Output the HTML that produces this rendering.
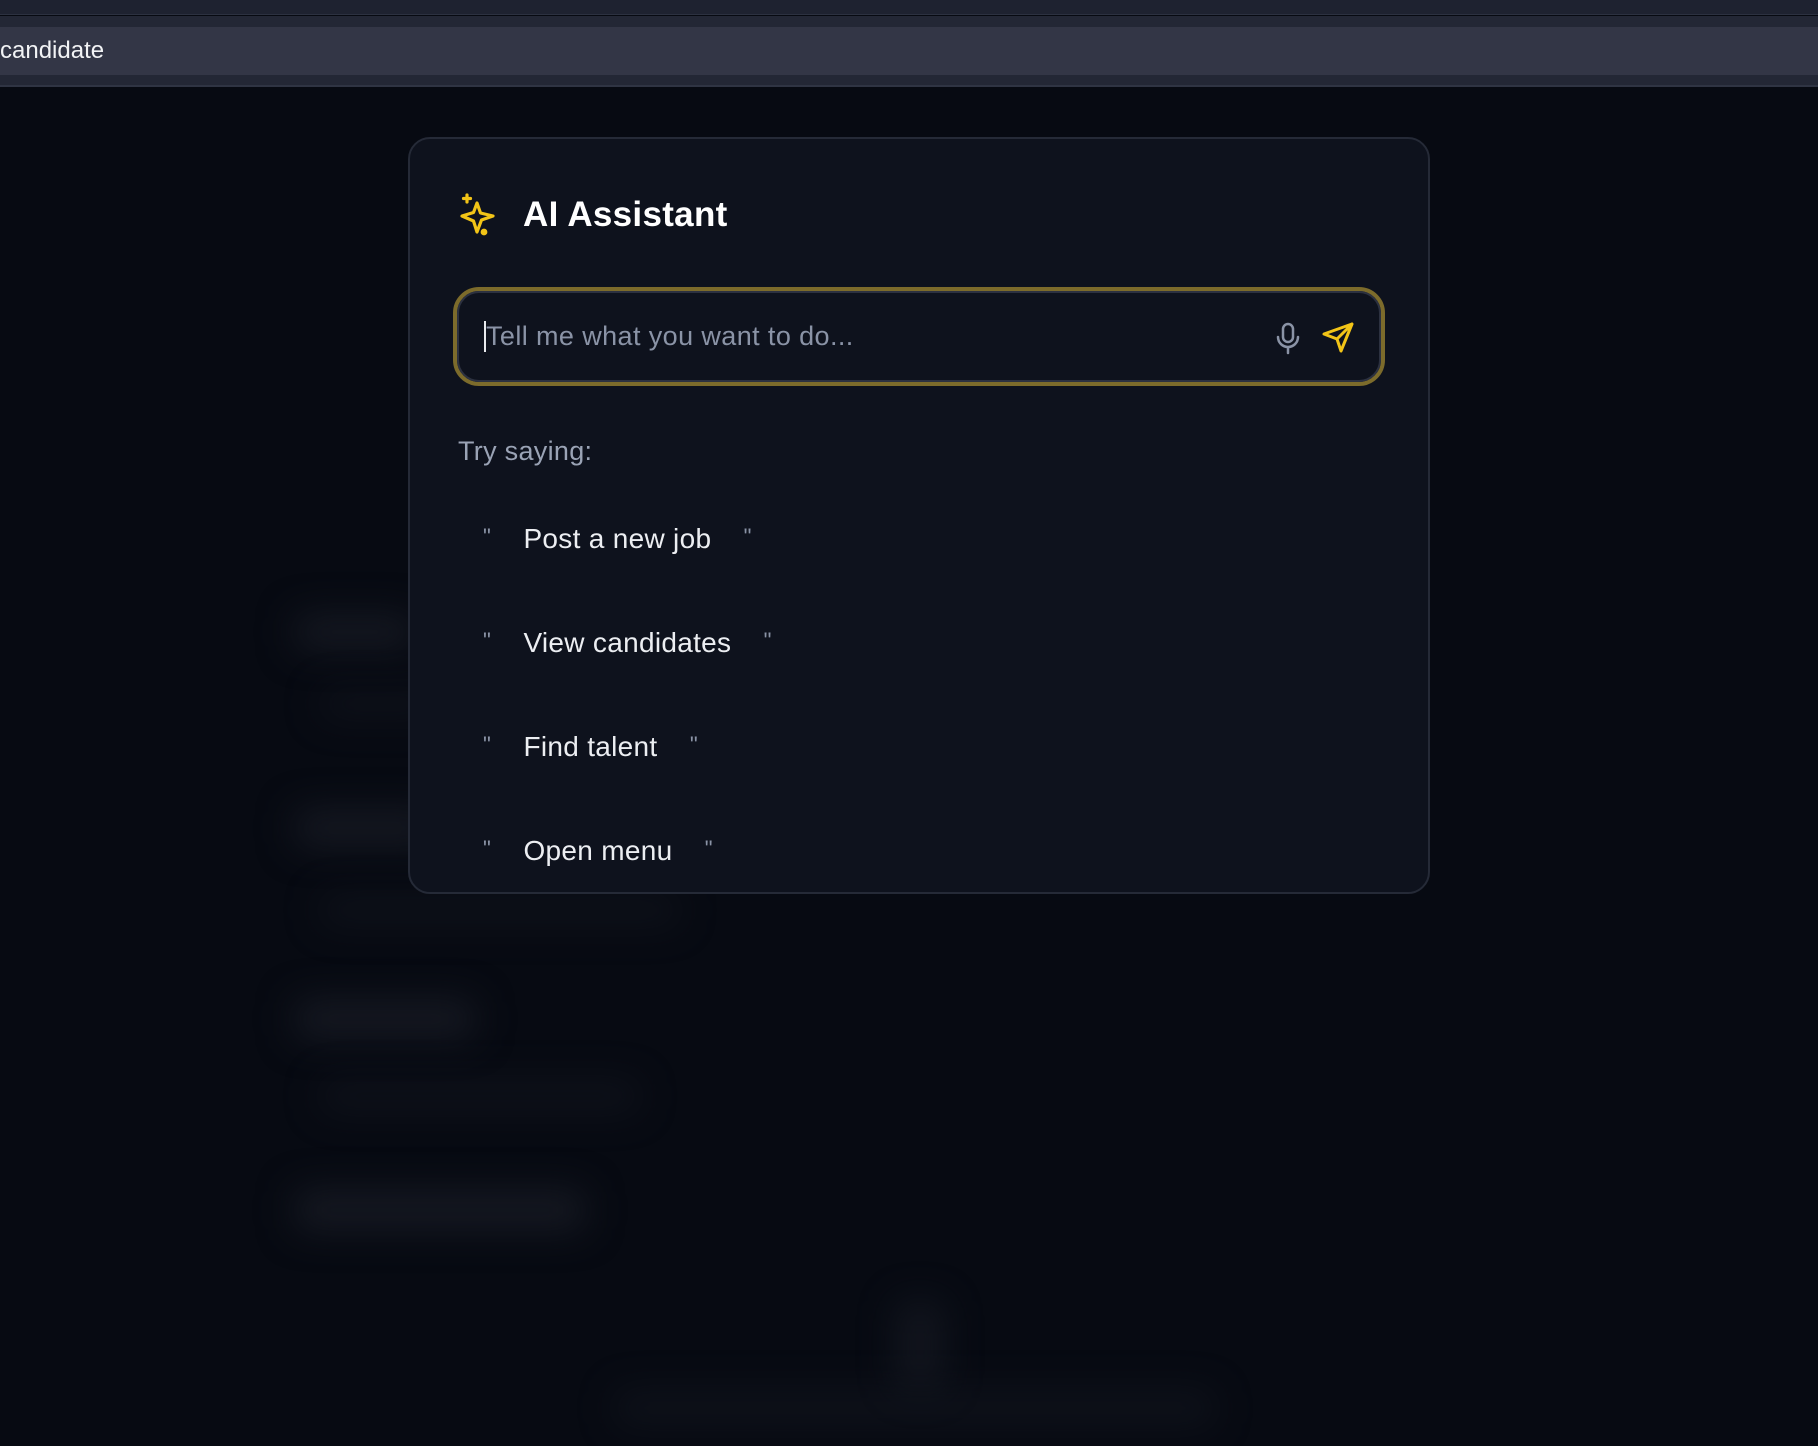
<!DOCTYPE html>
<html><head><meta charset="utf-8"><style>
*{margin:0;padding:0;box-sizing:border-box}
html,body{width:1818px;height:1446px;overflow:hidden;background:#070a12;font-family:"Liberation Sans",sans-serif}
.top{position:absolute;left:0;top:0;width:1818px;height:15px;background:#1e2230;border-bottom:1px solid #2c3140}
.tabrow{position:absolute;left:0;top:16px;width:1818px;height:71px;background:#232735;border-bottom:2px solid #2f3443}
.tab{position:absolute;left:0;top:11px;width:1818px;height:48px;background:#333646;color:#f2f3f5;font-size:24px;line-height:48px;padding-left:0}
.blob{position:absolute;background:#161922;filter:blur(18px);border-radius:10px}
.card{position:absolute;left:408px;top:137px;width:1022px;height:757px;background:#0e121d;border:2px solid #252a37;border-radius:22px}
.title{position:absolute;left:113px;top:56px;color:#fff;font-size:35px;font-weight:bold;letter-spacing:0.3px}
.icon{position:absolute;left:48px;top:53px}
.input{position:absolute;left:43px;top:148px;width:932px;height:99px;border:4px solid #7c6b2b;border-radius:26px;background:#0e121d}
.input .inner{position:absolute;inset:0;border:2px solid #2c3140;border-radius:22px}
.ph{position:absolute;left:27px;top:30px;color:#8a93a6;font-size:27px;border-left:2px solid #e8eaee;letter-spacing:0.4px}
.try{position:absolute;left:48px;top:297px;color:#9aa3b5;font-size:27px;letter-spacing:0.3px}
.item{position:absolute;left:73px;color:#eceef2;font-size:28px;letter-spacing:0.3px}
.item .q{color:#8a93a6;font-size:22px;position:relative;top:-4px}
</style></head><body>
<div class="top"></div>
<div class="tabrow"><div class="tab">candidate</div></div>
<div class="blob" style="left:295px;top:615px;width:120px;height:34px"></div>
<div class="blob" style="left:320px;top:690px;width:120px;height:28px;opacity:.5"></div>
<div class="blob" style="left:295px;top:810px;width:140px;height:36px"></div>
<div class="blob" style="left:320px;top:895px;width:360px;height:30px;opacity:.5"></div>
<div class="blob" style="left:295px;top:1000px;width:180px;height:38px"></div>
<div class="blob" style="left:320px;top:1080px;width:320px;height:32px;opacity:.5"></div>
<div class="blob" style="left:295px;top:1190px;width:290px;height:40px"></div>
<div class="blob" style="left:895px;top:1300px;width:50px;height:90px;opacity:.7"></div>
<div class="blob" style="left:615px;top:1390px;width:600px;height:36px;opacity:.5"></div>
<div class="card">
 <svg class="icon" width="42" height="44" viewBox="0 0 42 44" fill="none" stroke="#f2c417" stroke-width="3.2" stroke-linejoin="round" stroke-linecap="round">
  <path d="M19 11 L22.5 21 L35 24 L23.5 28 L19 40 L15.5 29 L4 24 L15.5 20.5 Z"/>
  <path d="M9 3 V10 M5.5 6.5 H12.5"/>
  <circle cx="26" cy="40" r="1.8" fill="#f2c417"/>
 </svg>
 <div class="title">AI Assistant</div>
 <div class="input"><div class="inner"></div>
  <div class="ph">Tell me what you want to do...</div>
  <svg style="position:absolute;left:817px;top:31px" width="28" height="34" viewBox="0 0 28 34" fill="none" stroke="#8a93a6" stroke-width="2.5" stroke-linecap="round"><rect x="9" y="2" width="10" height="18" rx="5"/><path d="M4 15 a10 10 0 0 0 20 0 M14 25 V31"/></svg>
  <svg style="position:absolute;left:864px;top:30px" width="34" height="34" viewBox="0 0 34 34" fill="none" stroke="#f2c417" stroke-width="3" stroke-linejoin="round" stroke-linecap="round"><path d="M3 13 L31 3 L20 30 L16 18 Z M16 18 L31 3"/></svg>
 </div>
 <div class="try">Try saying:</div>
 <div class="item" style="top:384px"><span class="q">"</span>&nbsp;&nbsp;&nbsp;&nbsp;Post a new job&nbsp;&nbsp;&nbsp;&nbsp;<span class="q">"</span></div>
 <div class="item" style="top:488px"><span class="q">"</span>&nbsp;&nbsp;&nbsp;&nbsp;View candidates&nbsp;&nbsp;&nbsp;&nbsp;<span class="q">"</span></div>
 <div class="item" style="top:592px"><span class="q">"</span>&nbsp;&nbsp;&nbsp;&nbsp;Find talent&nbsp;&nbsp;&nbsp;&nbsp;<span class="q">"</span></div>
 <div class="item" style="top:696px"><span class="q">"</span>&nbsp;&nbsp;&nbsp;&nbsp;Open menu&nbsp;&nbsp;&nbsp;&nbsp;<span class="q">"</span></div>
</div>
</body></html>
